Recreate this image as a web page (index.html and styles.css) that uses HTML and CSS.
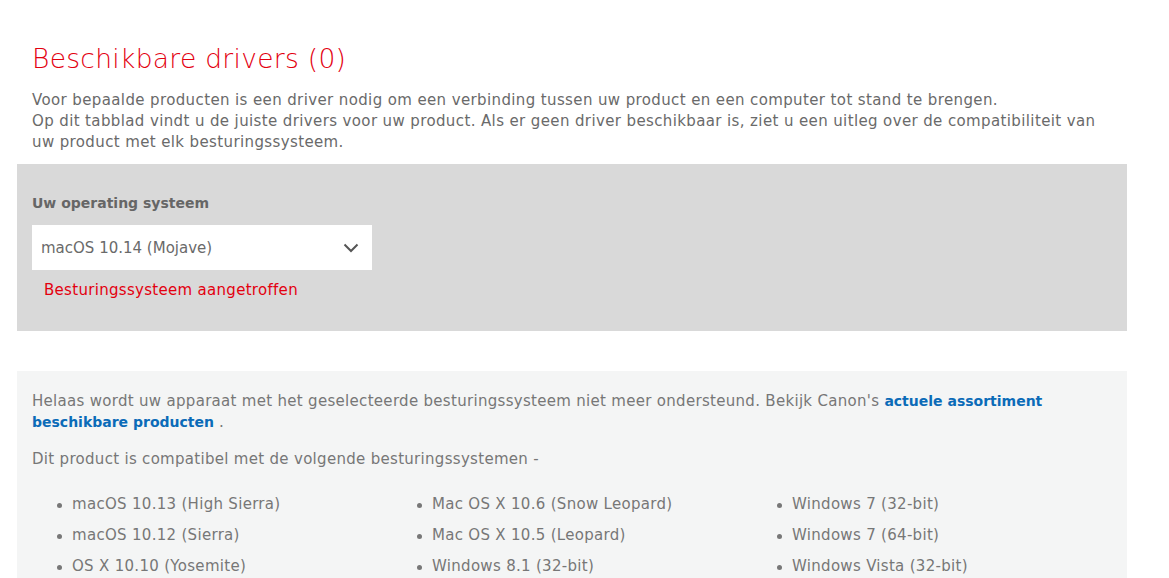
FILE: index.html
```html
<!DOCTYPE html>
<html lang="nl">
<head>
<meta charset="utf-8">
<title>Beschikbare drivers</title>
<link rel="stylesheet" href="styles.css">
</head>
<body>
<div class="page">
  <h2 class="title">Beschikbare drivers (0)</h2>
  <p class="intro">Voor bepaalde producten is een driver nodig om een verbinding tussen uw product en een computer tot stand te brengen.<br>Op dit tabblad vindt u de juiste drivers voor uw product. Als er geen driver beschikbaar is, ziet u een uitleg over de compatibiliteit van<br>uw product met elk besturingssysteem.</p>

  <div class="os-panel">
    <div class="os-label">Uw operating systeem</div>
    <div class="select">
      <span class="select-value">macOS 10.14 (Mojave)</span>
      <svg class="chevron" width="16" height="10" viewBox="0 0 16 10"><path d="M1.5 1.5 L8 8 L14.5 1.5" fill="none" stroke="#555" stroke-width="2"/></svg>
    </div>
    <div class="detected">Besturingssysteem aangetroffen</div>
  </div>

  <div class="compat">
    <p class="notice">Helaas wordt uw apparaat met het geselecteerde besturingssysteem niet meer ondersteund. Bekijk Canon's <a class="link" href="#">actuele assortiment<br>beschikbare producten</a> .</p>
    <p class="notice second">Dit product is compatibel met de volgende besturingssystemen -</p>
    <ul class="os-list">
      <li>macOS 10.13 (High Sierra)</li>
      <li>macOS 10.12 (Sierra)</li>
      <li>OS X 10.10 (Yosemite)</li>
      <li>Mac OS X 10.6 (Snow Leopard)</li>
      <li>Mac OS X 10.5 (Leopard)</li>
      <li>Windows 8.1 (32-bit)</li>
      <li>Windows 7 (32-bit)</li>
      <li>Windows 7 (64-bit)</li>
      <li>Windows Vista (32-bit)</li>
    </ul>
  </div>
</div>
</body>
</html>
```
FILE: styles.css
```css
html, body {
  margin: 0;
  padding: 0;
  background: #fff;
}
body {
  font-family: "DejaVu Sans", "Noto Sans", sans-serif;
  color: #6a6a6a;
}
.page {
  width: 1110px;
  margin-left: 17px;
}
.title {
  margin: 43px 0 0 15px;
  font-size: 26.5px;
  line-height: 32px;
  font-weight: 200;
  color: #e3000f;
  letter-spacing: 0.3px;
}
.intro {
  margin: 15px 0 0 15px;
  font-size: 15px;
  line-height: 21px;
  letter-spacing: 0.38px;
  color: #6a6a6a;
}
.os-panel {
  margin-top: 11px;
  background: #d9d9d9;
  padding: 29px 15px 31px;
}
.os-label {
  font-size: 14px;
  line-height: 20px;
  font-weight: bold;
  color: #666;
}
.select {
  margin-top: 12px;
  width: 340px;
  height: 45px;
  background: #fff;
  display: flex;
  align-items: center;
  justify-content: space-between;
  padding: 0 13px 0 9px;
  box-sizing: border-box;
}
.select-value {
  font-size: 15px;
  color: #6a6a6a;
}
.chevron {
  display: block;
}
.detected {
  margin: 10px 0 0 12px;
  font-size: 15px;
  line-height: 20px;
  letter-spacing: 0.3px;
  color: #e3000f;
}
.compat {
  margin-top: 40px;
  background: #f4f5f5;
  padding: 20px 15px 20px;
}
.notice {
  margin: 0;
  font-size: 15px;
  line-height: 21px;
  letter-spacing: 0.3px;
  color: #777;
}
.notice.second {
  margin-top: 16px;
}
.link {
  color: #0b6bb8;
  font-weight: bold;
  font-size: 14px;
  letter-spacing: 0;
  text-decoration: none;
}
.os-list {
  list-style: none;
  margin: 24px 0 0;
  padding: 0 0 0 25px;
  display: grid;
  grid-template-columns: repeat(3, 360px);
  grid-template-rows: repeat(3, 21px);
  grid-auto-flow: column;
  row-gap: 10px;
}
.os-list li {
  position: relative;
  padding-left: 15px;
  font-size: 15px;
  line-height: 21px;
  letter-spacing: 0.3px;
  color: #777;
}
.os-list li::before {
  content: "";
  position: absolute;
  left: 0;
  top: 9px;
  width: 5px;
  height: 5px;
  border-radius: 50%;
  background: #777;
}
```
